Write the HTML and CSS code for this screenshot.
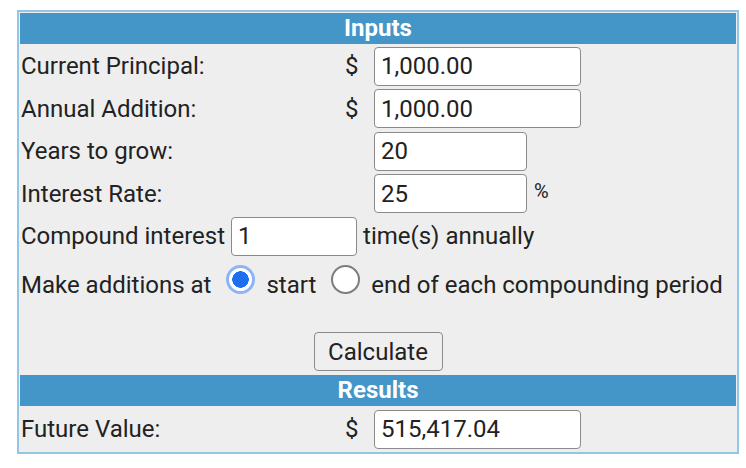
FILE: index.html
```html
<!DOCTYPE html>
<html lang="en">
<head>
  <meta charset="UTF-8">
  <title>Compound Interest Calculator</title>
  <link rel="stylesheet" href="styles.css">
</head>
<body>

  <form class="calc">
    <div class="section-head">Inputs</div>

    <div class="row">
      <label class="label" for="principal">Current Principal:</label>
      <span class="unit">$</span>
      <div class="field"><input class="box wide" id="principal" type="text" value="1,000.00"></div>
    </div>

    <div class="row">
      <label class="label" for="addition">Annual Addition:</label>
      <span class="unit">$</span>
      <div class="field"><input class="box wide" id="addition" type="text" value="1,000.00"></div>
    </div>

    <div class="row">
      <label class="label" for="years">Years to grow:</label>
      <span class="unit"></span>
      <div class="field"><input class="box mid" id="years" type="text" value="20"></div>
    </div>

    <div class="row">
      <label class="label" for="rate">Interest Rate:</label>
      <span class="unit"></span>
      <div class="field"><input class="box mid" id="rate" type="text" value="25"><span class="pct">%</span></div>
    </div>

    <div class="line">
      <label for="times">Compound interest</label>
      <input class="box short" id="times" type="text" value="1">
      <span>time(s) annually</span>
    </div>

    <div class="line additions">
      <span>Make additions at</span>
      <input class="radio" type="radio" name="when" id="start" checked>
      <label for="start">start</label>
      <input class="radio" type="radio" name="when" id="end">
      <label for="end">end of each compounding period</label>
    </div>

    <div class="actions">
      <button type="button">Calculate</button>
    </div>

    <div class="section-head">Results</div>

    <div class="row">
      <label class="label" for="future">Future Value:</label>
      <span class="unit">$</span>
      <div class="field"><input class="box wide" id="future" type="text" value="515,417.04" readonly></div>
    </div>
  </form>

</body>
</html>
```

FILE: styles.css
```css
body {
  margin: 0;
  padding: 10px 0 0 17px;
  background: #ffffff;
  font-family: Roboto, "Liberation Sans", sans-serif;
  font-size: 24px;
  color: #222222;
}
.calc {
  width: 716px;
  border: 2px solid #93c5e4;
  padding: 1px;
  background: #eeeeee;
}
.section-head {
  height: 31px;
  line-height: 31px;
  background: #4496c8;
  color: #ffffff;
  font-weight: bold;
  text-align: center;
}
.row {
  display: grid;
  grid-template-columns: 323px 30px auto;
  align-items: center;
  height: 42.5px;
  padding-left: 1px;
}
.row:nth-child(2) {
  margin-top: 1px;
}
.unit {
  padding-left: 1px;
}
.field {
  display: flex;
  align-items: center;
  gap: 7px;
}
.box {
  box-sizing: border-box;
  height: 39px;
  padding: 0 6px;
  border: 1px solid #8a8a8a;
  border-radius: 4px;
  background: #ffffff;
  font-family: inherit;
  font-size: 24px;
  color: #222222;
}
.wide {
  width: 207px;
}
.mid {
  width: 153px;
}
.short {
  width: 126px;
}
.pct {
  font-size: 20px;
  padding-bottom: 6px;
}
.line {
  display: flex;
  align-items: center;
  gap: 6px;
  height: 42.5px;
  padding-left: 1px;
}
.additions {
  gap: 0;
  margin-top: 1px;
}
.additions span,
.additions label {
  padding-top: 10px;
}
.radio {
  appearance: none;
  -webkit-appearance: none;
  box-sizing: border-box;
  width: 29px;
  height: 29px;
  margin: 0 11px 0 15px;
  border: 2px solid #7d7d7d;
  border-radius: 50%;
  background: #ffffff;
}
.radio:checked {
  border: 3px solid #8db4f5;
  background: radial-gradient(circle, #1f6ef0 0 8px, #ffffff 8.5px);
}
.actions {
  display: flex;
  justify-content: center;
  padding: 31px 0 4px;
}
button {
  box-sizing: border-box;
  width: 129px;
  height: 39px;
  border: 1px solid #8a8a8a;
  border-radius: 4px;
  background: #efefef;
  font-family: inherit;
  font-size: 24px;
  color: #222222;
}
.actions + .section-head {
  margin-bottom: 2px;
}
```
